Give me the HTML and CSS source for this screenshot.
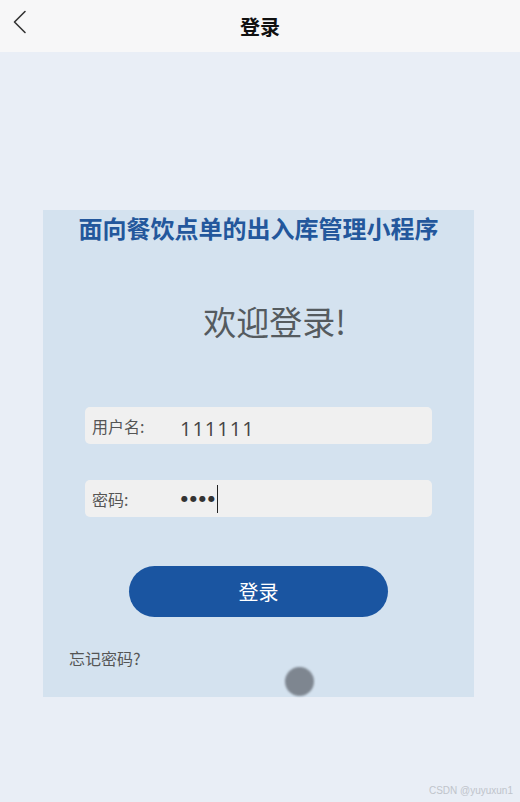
FILE: index.html
```html
<!DOCTYPE html>
<html lang="zh-CN">
<head>
    <meta charset="UTF-8">
    <meta name="viewport" content="width=device-width, initial-scale=1.0">
    <title>登录</title>
    <link rel="stylesheet" href="styles.css">
</head>
<body>

    <!-- Navigation bar -->
    <div class="nav-bar">
        <span class="nav-back">
            <svg width="16" height="24" viewBox="0 0 16 24">
                <path d="M13 1.5 L2.5 12 L13 22.5" fill="none" stroke="#333" stroke-width="1.6" stroke-linecap="round" stroke-linejoin="round"/>
            </svg>
        </span>
        <span class="nav-title">登录</span>
    </div>

    <div class="page">
        <div class="card">
            <h1 class="app-title">面向餐饮点单的出入库管理小程序</h1>
            <h2 class="welcome">欢迎登录!</h2>

            <form class="login-form">
                <div class="field">
                    <label for="username">用户名:</label>
                    <input type="text" id="username" value="111111">
                </div>
                <div class="field">
                    <label for="password">密码:</label>
                    <div class="password-value">
                        <span class="dots">&#9679;&#9679;&#9679;&#9679;</span><span class="caret"></span>
                    </div>
                </div>

                <button type="button" class="login-btn">登录</button>
            </form>

            <div class="forgot">忘记密码?</div>
            <div class="touch-dot"></div>
        </div>
    </div>

    <div class="watermark">CSDN @yuyuxun1</div>

</body>
</html>
```

FILE: styles.css
```css
body {
    margin: 0;
    padding: 0;
    width: 520px;
    height: 802px;
    background-color: #e9eef6;
    font-family: "Noto Sans CJK SC", "Open Sans", sans-serif;
    position: relative;
    overflow: hidden;
}

.nav-bar {
    height: 52px;
    background-color: #f7f7f8;
    display: flex;
    align-items: center;
    justify-content: center;
    position: relative;
}

.nav-back {
    position: absolute;
    left: 12px;
    top: 10px;
}

.nav-title {
    font-size: 20px;
    font-weight: bold;
    color: #111;
}

.page {
    padding: 158px 0 0 43px;
    display: flex;
}

.card {
    width: 431px;
    height: 487px;
    background-color: #d4e2ef;
    position: relative;
}

.app-title {
    margin: 0;
    padding-top: 2px;
    text-align: center;
    font-size: 24px;
    line-height: 32px;
    font-weight: bold;
    color: #23579c;
}

.welcome {
    margin: 56px 0 0 32px;
    text-align: center;
    font-size: 33px;
    line-height: 42px;
    font-weight: normal;
    color: #555b5f;
}

.login-form {
    display: flex;
    flex-direction: column;
    align-items: flex-start;
    margin-top: 65px;
}

.field {
    width: 347px;
    height: 37px;
    margin-left: 42px;
    background-color: #f0f0f0;
    border-radius: 5px;
    display: flex;
    align-items: center;
    margin-bottom: 36px;
}

.field label {
    width: 96px;
    padding-left: 7px;
    box-sizing: border-box;
    font-size: 16px;
    color: #555;
}

.field input {
    flex: 1;
    border: none;
    background: transparent;
    outline: none;
    font-family: "Open Sans", sans-serif;
    font-size: 20px;
    line-height: 26px;
    height: 26px;
    margin-top: 6px;
    color: #444;
    padding: 0;
    letter-spacing: 1px;
}

.password-value {
    display: flex;
    align-items: center;
}

.dots {
    font-family: "DejaVu Sans", sans-serif;
    font-size: 8px;
    color: #333;
    letter-spacing: 2px;
}

.caret {
    width: 1.5px;
    height: 28px;
    background-color: #222;
    margin-left: 0;
}

.login-btn {
    width: 259px;
    height: 51px;
    margin: 13px 0 0 86px;
    border: none;
    border-radius: 26px;
    background-color: #1a55a1;
    color: #fff;
    font-family: "Noto Sans CJK SC", sans-serif;
    font-size: 20px;
    cursor: pointer;
}

.forgot {
    margin: 29px 0 0 26px;
    font-size: 16px;
    color: #555;
}

.touch-dot {
    position: absolute;
    left: 242px;
    top: 457px;
    width: 29px;
    height: 29px;
    border-radius: 50%;
    background-color: #7e8690;
    filter: blur(1px);
}

.watermark {
    position: absolute;
    right: 7px;
    bottom: 6px;
    font-family: "Liberation Sans", sans-serif;
    font-size: 10px;
    color: #c0c4cb;
}
```
